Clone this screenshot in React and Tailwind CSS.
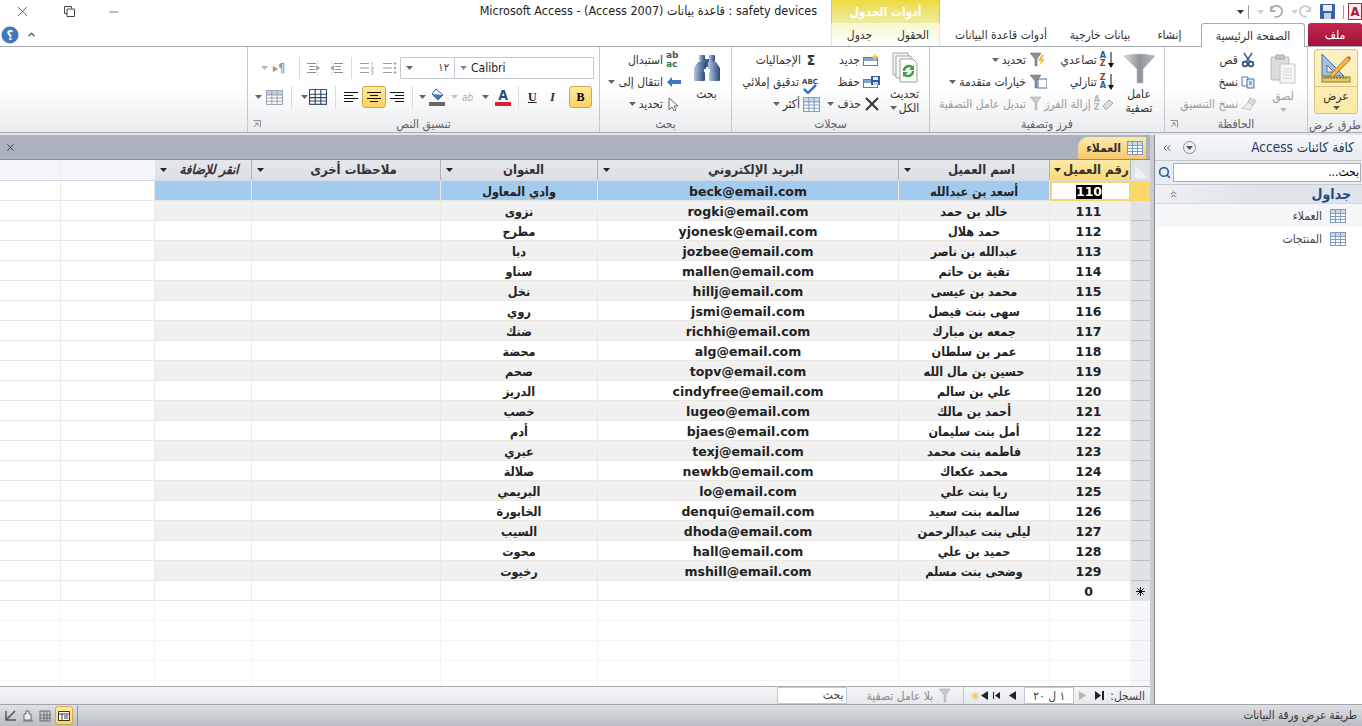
import { ChevronsLeft, ChevronsUp, Search, X, Minus, ChevronUp } from "lucide-react";

const rows = [
  ["110", "أسعد بن عبدالله", "beck@email.com", "وادي المعاول"],
  ["111", "خالد بن حمد", "rogki@email.com", "نزوى"],
  ["112", "حمد هلال", "yjonesk@email.com", "مطرح"],
  ["113", "عبدالله بن ناصر", "jozbee@email.com", "دبا"],
  ["114", "تقية بن حاتم", "mallen@email.com", "سناو"],
  ["115", "محمد بن عيسى", "hillj@email.com", "نخل"],
  ["116", "سهى بنت فيصل", "jsmi@email.com", "روي"],
  ["117", "جمعه بن مبارك", "richhi@email.com", "ضنك"],
  ["118", "عمر بن سلطان", "alg@email.com", "محضة"],
  ["119", "حسين بن مال الله", "topv@email.com", "صحم"],
  ["120", "علي بن سالم", "cindyfree@email.com", "الدريز"],
  ["121", "أحمد بن مالك", "lugeo@email.com", "خصب"],
  ["122", "أمل بنت سليمان", "bjaes@email.com", "أدم"],
  ["123", "فاطمه بنت محمد", "texj@email.com", "عبري"],
  ["124", "محمد عكعاك", "newkb@email.com", "صلالة"],
  ["125", "ريا بنت علي", "lo@email.com", "البريمي"],
  ["126", "سالمه بنت سعيد", "denqui@email.com", "الخابورة"],
  ["127", "ليلى بنت عبدالرحمن", "dhoda@email.com", "السيب"],
  ["128", "حميد بن علي", "hall@email.com", "محوت"],
  ["129", "وضحى بنت مسلم", "mshill@email.com", "رخيوت"],
];

const gridCols = "grid grid-cols-[61px_94px_97px_189px_157px_301px_151px_81px_19px]";
const cell = "border-r border-b border-[#ece9e2] flex items-center justify-center overflow-hidden pt-[3px] leading-[14px]";
const latin = "[font-family:'DejaVu_Sans',sans-serif]";

function Arrow({ className = "" }) {
  return (
    <svg width="7" height="4" viewBox="0 0 7 4" className={`shrink-0 ${className}`}>
      <path d="M0 0h7L3.5 4z" fill="currentColor" />
    </svg>
  );
}

function GridIcon({ size = 16, line = "#7f9cc0", head = "#c9d8ea" }) {
  return (
    <svg width={size} height={size - 2} viewBox="0 0 16 14" className="shrink-0">
      <rect x="0.5" y="0.5" width="15" height="13" fill="#fff" stroke={line} />
      <rect x="1" y="1" width="14" height="3" fill={head} />
      <path d="M0 4.5h16M0 7.5h16M0 10.5h16M5.5 0v14M10.5 0v14" stroke={line} />
    </svg>
  );
}

function Sep() {
  return <div className="w-px h-[22px] bg-[#d8dadd] shrink-0" />;
}

function Launcher() {
  return (
    <svg width="8" height="8" viewBox="0 0 8 8">
      <path d="M0.5 0.5h7v7M1 7l4-4M2 3h3v3" fill="none" stroke="#8c9097" />
    </svg>
  );
}

function Group({ w, label, launcher, children }) {
  return (
    <div className={`${w} shrink-0 border-r border-[#c5c9ce] flex flex-col`}>
      <div className="h-[69px] flex">{children}</div>
      <div className="h-[16px] flex items-center px-[6px] text-[12px] text-[#5c6066] relative justify-center">
        {launcher && (
          <span className="absolute left-[5px] top-[4px]">
            <Launcher />
          </span>
        )}
        <span dir="rtl">{label}</span>
      </div>
    </div>
  );
}

function Item({ icon, text, arrow, muted, className = "" }) {
  return (
    <div className={`h-[22px] flex items-center justify-end gap-[3px] whitespace-nowrap text-[12px] ${muted ? "text-[#9a9a9a]" : "text-[#333]"} ${className}`}>
      {arrow && <Arrow className="text-[#666]" />}
      <span dir="rtl">{text}</span>
      {icon}
    </div>
  );
}

function LinesIcon({ kind }) {
  const lines = {
    left: "M0 1.5h14M0 4.5h9M0 7.5h14M0 10.5h9",
    center: "M0 1.5h14M3 4.5h8M0 7.5h14M3 10.5h8",
    right: "M0 1.5h14M5 4.5h9M0 7.5h14M5 10.5h9",
  };
  return (
    <svg width="14" height="12" viewBox="0 0 14 12">
      <path d={lines[kind]} stroke="#111" fill="none" />
    </svg>
  );
}

function ListIcon({ numbers }) {
  return (
    <svg width="15" height="14" viewBox="0 0 15 14">
      <path d="M0 2.5h9M0 7h9M0 11.5h9" stroke="#9a9ea4" />
      {numbers ? (
        <path d="M12 1v3M11 6h2v2h-2M11 10h2v3h-2" stroke="#a9adb3" fill="none" />
      ) : (
        <g fill="#a9adb3">
          <circle cx="12" cy="2.5" r="1.3" />
          <circle cx="12" cy="7" r="1.3" />
          <circle cx="12" cy="11.5" r="1.3" />
        </g>
      )}
    </svg>
  );
}

function IndentIcon({ flip }) {
  return (
    <svg width="16" height="16" viewBox="0 0 16 16" className={flip ? "-scale-x-100" : ""}>
      <path d="M1 3.5h9M3 6.5h6M3 9.5h6M1 12.5h9" stroke="#8d9197" />
      <path d="M10 5l4 3-4 3z" fill="#a4a8ad" />
      <path d="M12 1v3M12 12v3" stroke="#c3c5c8" strokeDasharray="1 1" />
    </svg>
  );
}

function Paste() {
  return (
    <svg width="26" height="30" viewBox="0 0 26 30">
      <rect x="1" y="3" width="18" height="23" rx="1" fill="#dcdcdc" stroke="#bbb" />
      <rect x="6" y="1" width="8" height="4" fill="#c8c8c8" stroke="#aaa" />
      <path d="M10 10h15v19H10z" fill="#f6f6f6" stroke="#c4c4c4" />
      <path d="M13 15h9M13 18h9M13 21h9M13 24h9" stroke="#d2d2d2" />
    </svg>
  );
}

function Funnel() {
  return (
    <svg width="31" height="31" viewBox="0 0 31 31">
      <defs>
        <linearGradient id="fnl" x1="0" x2="1">
          <stop offset="0" stopColor="#d5d8dc" />
          <stop offset="0.5" stopColor="#8f9499" />
          <stop offset="1" stopColor="#b5b9be" />
        </linearGradient>
      </defs>
      <path d="M0 3q15 -4 31 0L19 16v14h-6V16z" fill="url(#fnl)" stroke="#a5a9ad" strokeWidth="0.5" />
    </svg>
  );
}

function Binoculars() {
  return (
    <svg width="28" height="28" viewBox="0 0 28 28">
      <defs>
        <linearGradient id="bin" x1="0" x2="1">
          <stop offset="0" stopColor="#b6c6dc" />
          <stop offset="0.5" stopColor="#6a86ad" />
          <stop offset="1" stopColor="#33496d" />
        </linearGradient>
      </defs>
      <rect x="6" y="1" width="6" height="7" rx="1" fill="url(#bin)" />
      <rect x="16" y="1" width="6" height="7" rx="1" fill="url(#bin)" />
      <rect x="12" y="5" width="4" height="8" fill="#3e5b87" />
      <path d="M5 8h8v7h-2v4H1v-5z" fill="url(#bin)" />
      <path d="M15 8h8l4 6v5H17v-4h-2z" fill="url(#bin)" />
      <rect x="1" y="18" width="11" height="9" rx="1" fill="url(#bin)" />
      <rect x="16" y="18" width="11" height="9" rx="1" fill="url(#bin)" />
    </svg>
  );
}

function ViewIcon() {
  return (
    <svg width="30" height="30" viewBox="0 0 30 30">
      <path d="M1 1v22h22z" fill="#a8c0dc" stroke="#4d6f99" />
      <path d="M6 12v7h7z" fill="#fdf6d8" stroke="#4d6f99" />
      <path d="M9 22L26 4l3 3-17 17-4 1z" fill="#f3b64a" stroke="#8a6a2a" strokeWidth="0.7" />
      <path d="M26 4l3 3 1-2-2-2z" fill="#d85c4a" />
      <rect x="1" y="24" width="28" height="5" fill="#e9c962" stroke="#8c7a3c" />
      <path d="M4 24v2M7 24v2M10 24v2M13 24v2M16 24v2M19 24v2M22 24v2M25 24v2" stroke="#6d5d2a" />
    </svg>
  );
}

function Refresh() {
  return (
    <svg width="26" height="32" viewBox="0 0 26 32">
      <path d="M1 1h15v22H1z" fill="#f2f2f2" stroke="#a5a9ad" />
      <path d="M4 4h15v22H4z" fill="#f7f7f7" stroke="#a5a9ad" />
      <path d="M8 7h13l4 4v19H8z" fill="#fff" stroke="#9a9ea3" />
      <path d="M12 19a5 5 0 0 1 9-3M21 19a5 5 0 0 1-9 3" fill="none" stroke="#3ba13a" strokeWidth="2.4" />
      <path d="M22 13v5h-5zM11 25v-5h5z" fill="#3ba13a" />
    </svg>
  );
}

function SortIcon({ desc, muted }) {
  const top = desc ? "Z" : "A";
  const bottom = desc ? "A" : "Z";
  return (
    <div className={`flex items-center gap-[2px] ${latin}`}>
      <div className={`flex flex-col text-[8px] leading-[8px] font-bold ${muted ? "text-[#b5b5b5]" : ""}`}>
        <span className={muted ? "" : desc ? "text-[#a23a2a]" : "text-[#2a5a9e]"}>{top}</span>
        <span className={muted ? "" : desc ? "text-[#2a5a9e]" : "text-[#a23a2a]"}>{bottom}</span>
      </div>
      {muted ? (
        <svg width="12" height="12" viewBox="0 0 12 12">
          <path d="M1 8l6-6 4 3-6 6H3z" fill="#ddd" stroke="#aaa" />
        </svg>
      ) : (
        <svg width="6" height="16" viewBox="0 0 6 16">
          <path d="M3 0v14" stroke="#111" />
          <path d="M0 11h6l-3 5z" fill="#111" />
        </svg>
      )}
    </div>
  );
}

function SmallFunnel({ children, muted }) {
  return (
    <svg width="18" height="16" viewBox="0 0 18 16" className="shrink-0">
      <path d="M1 1h11L8 7v7H6V7z" fill={muted ? "#c6c8cb" : "#8a9097"} stroke={muted ? "#aaa" : "#666"} strokeWidth="0.5" />
      {children}
    </svg>
  );
}

function Sheet({ save }) {
  return (
    <svg width="17" height="14" viewBox="0 0 17 14">
      <rect x="0.5" y="4.5" width="14" height="8" fill="#fff" stroke="#5a7fae" />
      <rect x="1" y="5" width="13" height="3" fill="#7fa6d2" />
      {save ? (
        <g>
          <rect x="8" y="1" width="9" height="9" fill="#2f5d99" />
          <rect x="10" y="2" width="5" height="3" fill="#e8eef7" />
          <rect x="10" y="7" width="5" height="3" fill="#c4cedd" />
        </g>
      ) : (
        <path d="M12 0l1.2 2.8L16 4l-2.8 1.2L12 8l-1.2-2.8L8 4l2.8-1.2z" fill="#f3c94e" />
      )}
    </svg>
  );
}

function Ribbon() {
  return (
    <div className="h-[86px] flex shrink-0 border-b border-[#a8abb0] bg-gradient-to-b from-white via-white to-[#e9ebed]">
      <div className="w-[248px] shrink-0 border-r border-[#c5c9ce]" />

      {/* text formatting */}
      <Group w="w-[352px]" label="تنسيق النص" launcher>
        <div className="w-full pt-[10px] pl-[7px] pr-[5px]">
          <div className="h-[22px] flex items-center">
            <div className="w-[6px]" />
            <Arrow className="text-[#b8b8b8]" />
            <div className="w-[22px] text-[#999] text-[12px] font-bold text-center">▸¶</div>
            <div className="w-[9px]" />
            <Sep />
            <div className="w-[6px]" />
            <IndentIcon />
            <div className="w-[6px]" />
            <IndentIcon flip />
            <div className="w-[7px]" />
            <Sep />
            <div className="w-[8px]" />
            <ListIcon numbers />
            <div className="w-[8px]" />
            <ListIcon />
            <div className="w-[2px]" />
            <div className="w-[55px] h-[22px] border border-[#c5c9ce] flex items-center justify-between px-[5px] text-[11px] text-[#333]">
              <Arrow className="text-[#666]" />
              <span>١٢</span>
            </div>
            <div className="w-[139px] h-[22px] border border-l-0 border-[#c5c9ce] flex items-center gap-[4px] px-[5px] text-[12px] text-[#222]">
              <Arrow className="text-[#888]" />
              <span>Calibri</span>
            </div>
          </div>
          <div className="h-[24px] mt-[6px] flex items-center">
            <Arrow className="text-[#666]" />
            <div className="w-[4px]" />
            <GridIcon size={17} line="#99a3b0" head="#c0cfe0" />
            <div className="w-[8px]" />
            <Sep />
            <div className="w-[9px]" />
            <Arrow className="text-[#666]" />
            <div className="w-[1px]" />
            <GridIcon size={18} line="#2f4568" head="#fff" />
            <div className="w-[8px]" />
            <Sep />
            <div className="w-[8px]" />
            <LinesIcon kind="left" />
            <div className="w-[4px]" />
            <div className="w-[24px] h-[22px] rounded-[3px] border border-[#d0a94a] bg-gradient-to-b from-[#fee89a] to-[#fdd35f] flex items-center justify-center">
              <LinesIcon kind="center" />
            </div>
            <div className="w-[4px]" />
            <LinesIcon kind="right" />
            <div className="w-[8px]" />
            <Sep />
            <div className="w-[6px]" />
            <Arrow className="text-[#666]" />
            <div className="w-[3px]" />
            <svg width="16" height="18" viewBox="0 0 16 18">
              <path d="M7 1l7 6-5 5-6-6z" fill="#fff" stroke="#2f5d99" />
              <path d="M3 6l6 6 5-5z" fill="#3f78ba" />
              <rect x="0" y="14" width="16" height="4" fill="#666" />
            </svg>
            <div className="w-[6px]" />
            <Arrow className="text-[#c4c4c4]" />
            <div className="w-[4px]" />
            <span className="text-[10px] text-[#aaa] w-[20px] italic">ab</span>
            <Arrow className="text-[#666]" />
            <div className="w-[6px]" />
            <div className="flex flex-col items-center w-[16px] leading-none">
              <span className="text-[14px] font-bold text-[#2a4d80] leading-[14px]">A</span>
              <span className="w-[16px] h-[4px] bg-[#d8232a]" />
            </div>
            <div className="w-[7px]" />
            <Sep />
            <div className="w-[9px]" />
            <span className="text-[12px] font-bold underline text-[#222] w-[12px] [font-family:'Liberation_Serif',serif]">U</span>
            <div className="w-[10px]" />
            <span className="text-[13px] italic font-bold text-[#333] w-[12px] [font-family:'Liberation_Serif',serif]">I</span>
            <div className="w-[7px]" />
            <div className="w-[23px] h-[22px] rounded-[3px] border border-[#d0a94a] bg-gradient-to-b from-[#fee89a] to-[#fdd35f] flex items-center justify-center text-[12px] font-bold [font-family:'Liberation_Serif',serif]">
              B
            </div>
          </div>
        </div>
      </Group>

      {/* find */}
      <Group w="w-[132px]" label="بحث">
        <div className="w-[82px] pt-[2px]">
          <Item
            text="استبدال"
            icon={
              <span className={`text-[9px] leading-[9px] font-bold text-[#555] w-[16px] ${latin}`}>
                ab<span className="block text-[#2f7a3a]">ac</span>
              </span>
            }
          />
          <Item
            text="انتقال إلى"
            arrow
            icon={
              <svg width="14" height="10" viewBox="0 0 14 10" className="mx-[1px]">
                <path d="M0 5l5-5v3h9v4H5v3z" fill="#3e78c0" />
              </svg>
            }
          />
          <Item
            text="تحديد"
            arrow
            icon={
              <svg width="12" height="14" viewBox="0 0 12 14" className="mx-[2px]">
                <path d="M1 1l9 8H6l2 4-2 1-2-4-3 3z" fill="#fff" stroke="#666" />
              </svg>
            }
          />
        </div>
        <div className="flex-1 flex flex-col items-center pt-[7px] text-[12px] text-[#333]">
          <Binoculars />
          <span className="mt-[3px]">بحث</span>
        </div>
      </Group>

      {/* records */}
      <Group w="w-[198px]" label="سجلات">
        <div className="w-[88px] pt-[2px]">
          <Item text="الإجماليات" className="pr-[2px]" icon={<span className="w-[14px] text-center text-[14px] font-bold leading-none">Σ</span>} />
          <Item
            text="تدقيق إملائي"
            icon={
              <span className={`w-[18px] relative text-[7px] font-bold text-[#444] leading-none ${latin}`}>
                ABC
                <svg width="14" height="10" viewBox="0 0 14 10" className="absolute left-[1px] top-[5px]">
                  <path d="M1 5l4 4 8-8" fill="none" stroke="#3f78ba" strokeWidth="2.5" />
                </svg>
              </span>
            }
          />
          <Item text="أكثر" arrow icon={<GridIcon size={17} />} />
        </div>
        <div className="w-[60px] pt-[2px]">
          <Item text="جديد" icon={<Sheet />} />
          <Item text="حفظ" icon={<Sheet save />} />
          <Item
            text="حذف"
            arrow
            icon={
              <svg width="14" height="14" viewBox="0 0 14 14" className="mx-[1px]">
                <path d="M1 1l12 12M13 1L1 13" stroke="#333" strokeWidth="2" />
              </svg>
            }
          />
        </div>
        <div className="flex-1 flex flex-col items-center pt-[5px] text-[12px] leading-[14px] text-[#333]">
          <Refresh />
          <span className="mt-[3px]">تحديث</span>
          <span className="flex items-center gap-[2px]">
            <Arrow className="text-[#666]" />
            الكل
          </span>
        </div>
      </Group>

      {/* sort and filter */}
      <Group w="w-[235px]" label="فرز وتصفية">
        <div className="w-[117px] pt-[2px]">
          <Item text="تحديد" arrow icon={<SmallFunnel><path d="M12 3l-3 6h3l-2 5 6-7h-3l2-4z" fill="#f2c23e" /></SmallFunnel>} />
          <Item text="خيارات متقدمة" arrow icon={<SmallFunnel><rect x="9" y="5" width="9" height="9" fill="#fff" stroke="#4a76aa" /></SmallFunnel>} />
          <Item text="تبديل عامل التصفية" muted icon={<SmallFunnel muted />} />
        </div>
        <div className="w-[67px] pt-[2px]">
          <Item text="تصاعدي" icon={<SortIcon />} />
          <Item text="تنازلي" icon={<SortIcon desc />} />
          <Item text="إزالة الفرز" muted icon={<SortIcon muted />} />
        </div>
        <div className="flex-1 flex flex-col items-center pt-[6px] text-[12px] leading-[14px] text-[#333]">
          <Funnel />
          <span className="mt-[3px]">عامل</span>
          <span>تصفية</span>
        </div>
      </Group>

      {/* clipboard */}
      <Group w="w-[143px]" label="الحافظة" launcher>
        <div className="w-[94px] pt-[2px] pr-[2px]">
          <Item
            text="قص"
            className="pr-[2px]"
            icon={
              <svg width="14" height="16" viewBox="0 0 14 16">
                <path d="M3 1l6 9M11 1L5 10" stroke="#3f5f8f" strokeWidth="1.5" />
                <circle cx="4" cy="12" r="2.4" fill="none" stroke="#2f4f7f" strokeWidth="1.6" />
                <circle cx="10" cy="12" r="2.4" fill="none" stroke="#2f4f7f" strokeWidth="1.6" />
              </svg>
            }
          />
          <Item
            text="نسخ"
            className="pr-[2px]"
            icon={
              <svg width="14" height="13" viewBox="0 0 14 13">
                <path d="M1 1h6v9H1z" fill="#fff" stroke="#4a76aa" />
                <path d="M6 3h7v9H6z" fill="#dce9f7" stroke="#4a76aa" />
                <path d="M8 6h3M8 8h3" stroke="#4a76aa" />
              </svg>
            }
          />
          <Item
            text="نسخ التنسيق"
            muted
            icon={
              <svg width="16" height="14" viewBox="0 0 16 14">
                <path d="M9 1l6 3-3 4-5-3z" fill="#ddd" stroke="#bbb" />
                <path d="M7 5l5 3-3 5-8-2q4-1 6-6z" fill="#eee" stroke="#c6c6c6" />
              </svg>
            }
          />
        </div>
        <div className="flex-1 flex flex-col items-center pt-[7px] text-[12px] leading-[14px] text-[#9a9a9a]">
          <Paste />
          <span className="mt-[5px]">لصق</span>
          <Arrow className="mt-[5px] text-[#bbb]" />
        </div>
      </Group>

      {/* views */}
      <div className="flex-1 flex flex-col">
        <div className="h-[69px] pl-[6px] pr-[4px] pt-[2px]">
          <div className="h-[65px] rounded-[3px] border border-[#d9c47c] bg-gradient-to-b from-[#fdf2c4] to-[#fbe9a6] flex flex-col items-center pt-[3px]">
            <ViewIcon />
            <div className="w-full h-px bg-[#d9c47c] mt-[3px]" />
            <span className="text-[12px] leading-[14px] mt-[2px] text-[#333]">عرض</span>
            <Arrow className="mt-[3px] text-[#555]" />
          </div>
        </div>
        <div className="h-[16px] text-[12px] text-[#5c6066] text-center whitespace-nowrap">طرق عرض</div>
      </div>
    </div>
  );
}

function Header() {
  return (
    <>
      <div className="h-[23px] flex shrink-0">
        <div className="w-[831px] shrink-0 flex items-center">
          <X size={17} strokeWidth={1} className="ml-[14px] text-[#333]" />
          <svg width="11" height="11" viewBox="0 0 11 11" className="ml-[33px]">
            <path d="M0.5 0.5h7v2M3 3h7.5v7.5H3zM0.5 0.5v7h2.5" fill="none" stroke="#444" />
          </svg>
          <Minus size={14} strokeWidth={1.2} className="ml-[32px] text-[#333]" />
          <div className="flex-1 text-[12.5px] text-[#222] whitespace-nowrap text-right pr-[14px]">
            Microsoft Access - (Access 2007) قاعدة بيانات : safety devices
          </div>
        </div>
        <div className="w-[109px] shrink-0 border-x border-[#dcc94b] bg-gradient-to-b from-[#efd93b] to-[#ecec9e] flex items-center justify-center text-[12px] font-bold text-white" dir="rtl">
          أدوات الجدول
        </div>
        <div className="flex-1 flex items-center justify-end">
          <Arrow className="text-[#333]" />
          <div className="w-px h-[14px] bg-[#999] ml-[4px]" />
          <Arrow className="text-[#ccc] ml-[8px]" />
          <svg width="14" height="13" viewBox="0 0 15 13" className="ml-[5px]">
            <path d="M2 1v5h5M2 6a6 6 0 1 1 4 6" fill="none" stroke="#a8aeb6" strokeWidth="2" />
          </svg>
          <Arrow className="text-[#ccc] ml-[8px]" />
          <svg width="13" height="13" viewBox="0 0 15 13" className="ml-[1px]">
            <path d="M13 1v5H8M13 6a6 6 0 1 0-4 6" fill="none" stroke="#c6cad0" strokeWidth="2" />
          </svg>
          <svg width="15" height="15" viewBox="0 0 15 15" className="ml-[8px]">
            <rect width="15" height="15" rx="1" fill="#3a5fa8" />
            <rect x="3" y="1" width="9" height="6" fill="#e8eef7" />
            <rect x="4" y="9" width="7" height="6" fill="#c4cedd" />
          </svg>
          <div className="w-px h-[14px] bg-[#999] ml-[8px]" />
          <div className="w-[14px] h-[17px] ml-[4px] border border-[#a52a4a] bg-[#fbeef0] text-[#a5173c] text-[13px] leading-[15px] font-bold text-center">
            A
          </div>
        </div>
      </div>
      <div className="h-[24px] flex shrink-0 items-end">
        <div className="w-[831px] shrink-0 flex items-center h-[24px] border-b border-[#a8abb0]">
          <svg width="18" height="18" viewBox="0 0 18 18" className="ml-[1px]">
            <circle cx="9" cy="9" r="8.5" fill="#3f78bf" />
            <text x="9" y="14" textAnchor="middle" fontSize="13" fontWeight="bold" fill="#fff">؟</text>
          </svg>
          <ChevronUp size={11} className="ml-[7px] text-[#444]" strokeWidth={2.5} />
        </div>
        <div className="h-[24px] w-[109px] shrink-0 border-x border-b border-[#e8e8b8] border-b-[#a8abb0] bg-gradient-to-b from-[#f7f7cf] to-white flex text-[12px] text-[#333]">
          <span className="w-[55px] text-center pt-[3px]">جدول</span>
          <span className="w-[52px] text-center pt-[3px]">الحقول</span>
        </div>
        <div className="w-[261px] shrink-0 h-[24px] border-b border-[#a8abb0] flex text-[12px] text-[#333]">
          <span className="w-[122px] text-center pt-[3px]" dir="rtl">أدوات قاعدة البيانات</span>
          <span className="w-[76px] text-center pt-[3px]">بيانات خارجية</span>
          <span className="w-[63px] text-center pt-[3px]">إنشاء</span>
        </div>
        <div className="w-[104px] shrink-0 h-[24px] border border-b-0 border-[#a8abb0] rounded-t-[3px] bg-white text-center text-[12px] text-[#333] pt-[3px]">
          الصفحة الرئيسية
        </div>
        <div className="w-[3px] shrink-0 h-[24px] border-b border-[#a8abb0]" />
        <div className="flex-1 h-[24px] rounded-t-[3px] border-b border-[#a8abb0] bg-gradient-to-b from-[#c4264f] to-[#a0123a] text-white text-center text-[12px] pt-[3px]">
          ملف
        </div>
      </div>
    </>
  );
}

function HeaderCell({ children, italic, pad = "ml-[6px]" }) {
  return (
    <div className="border-r border-[#aeb3ba] bg-gradient-to-b from-[#e4e7eb] to-[#dcdfe4] flex items-center pl-[5px] pr-[3px] overflow-hidden">
      <Arrow className="text-[#222]" />
      <span dir="rtl" className={`${pad} flex-1 text-center text-[13px] font-bold text-[#333] whitespace-nowrap ${italic ? "italic" : ""}`}>
        {children}
      </span>
    </div>
  );
}

function Datasheet() {
  return (
    <div className="flex-1 flex flex-col min-h-0 overflow-hidden bg-white">
      <div className={`${gridCols} h-[21px] shrink-0 bg-[#f5f6fc] border-b border-[#d7dae0]`}>
        <div className="border-r border-[#ece9f2]" />
        <div />
        <HeaderCell italic pad="ml-[3px]">انقر للإضافة</HeaderCell>
        <HeaderCell>ملاحظات أخرى</HeaderCell>
        <HeaderCell pad="ml-[0px]">العنوان</HeaderCell>
        <HeaderCell>البريد الإلكتروني</HeaderCell>
        <HeaderCell>اسم العميل</HeaderCell>
        <div className="border-r border-[#aeb3ba] bg-gradient-to-b from-[#fdeaa8] to-[#fbd96f] flex items-center pl-[4px] pr-[2px]">
          <Arrow className="text-[#222]" />
          <span dir="rtl" className="ml-[2px] flex-1 text-center text-[13px] font-bold text-[#333] whitespace-nowrap">رقم العميل</span>
        </div>
        <div className="bg-[#dfe2e7] flex items-end justify-end p-[2px]">
          <svg width="13" height="13" viewBox="0 0 13 13">
            <path d="M0 0l13 13H0z" fill="#eef0f3" />
          </svg>
        </div>
      </div>

      {rows.map((r, i) => {
        const selected = i === 0;
        const bg = selected ? "bg-[#a3cbee]" : i % 2 === 1 ? "bg-[#f0f0f0]" : "bg-white";
        return (
          <div key={r[0]} className={`${gridCols} h-[20px] shrink-0 text-[12.5px] font-bold text-[#222]`}>
            <div className="border-r border-b border-[#ece9e2] bg-white" />
            <div className="border-r border-b border-[#ece9e2] bg-white" />
            <div className={`${cell} ${bg}`} />
            <div className={`${cell} ${bg}`} />
            <div className={`${cell} ${bg}`} dir="rtl">{r[3]}</div>
            <div className={`${cell} ${bg} ${latin}`}>{r[2]}</div>
            <div className={`${cell} ${bg}`} dir="rtl">{r[1]}</div>
            {selected ? (
              <div className={`bg-white border-2 border-[#f5d573] flex items-center justify-center pt-[2px] pr-[3px] ${latin}`}>
                <span className="bg-black text-white leading-[14px]">{r[0]}</span>
              </div>
            ) : (
              <div className={`${cell} ${bg} ${latin} pr-[3px]`}>{r[0]}</div>
            )}
            <div className={selected ? "bg-[#fdd868]" : "bg-[#dfe2e7] border-b border-[#b9bdc4]"} />
          </div>
        );
      })}

      <div className={`${gridCols} h-[20px] shrink-0 text-[12.5px] font-bold text-[#222] ${latin}`}>
        <div className={cell} />
        <div className={cell} />
        <div className={cell} />
        <div className={cell} />
        <div className={cell} />
        <div className={cell} />
        <div className={cell} />
        <div className={`${cell} pr-[3px]`}>0</div>
        <div className="bg-[#dfe2e7] flex items-center justify-center">
          <svg width="9" height="9" viewBox="0 0 9 9">
            <path d="M4.5 0v9M0 4.5h9M1.3 1.3l6.4 6.4M7.7 1.3L1.3 7.7" stroke="#111" />
          </svg>
        </div>
      </div>

      {[0, 1, 2, 3, 4].map((i) => (
        <div key={i} className={`${gridCols} h-[20px] shrink-0`}>
          <div className="border-r border-b border-[#f5f4f0]" />
          <div className="border-r border-b border-[#f5f4f0]" />
          <div className="border-r border-b border-[#f5f4f0]" />
          <div className="border-r border-b border-[#f5f4f0]" />
          <div className="border-r border-b border-[#f5f4f0]" />
          <div className="border-r border-b border-[#f5f4f0]" />
          <div className="border-r border-b border-[#f5f4f0]" />
          <div className="border-r border-b border-[#f5f4f0]" />
          <div className="bg-[#f5f6fc] border-b border-[#e8e9ef]" />
        </div>
      ))}
    </div>
  );
}

function NavGlyph({ d, muted }) {
  return (
    <svg width="9" height="9" viewBox="0 0 9 9" className="shrink-0">
      <path d={d} fill={muted ? "#b5b5b5" : "#222"} />
    </svg>
  );
}

function RecordBar() {
  return (
    <div className="h-[18px] shrink-0 border-t border-[#a8abb0] bg-gradient-to-b from-[#f4f5f6] to-[#e6e8ec] flex items-center justify-end text-[12px] text-[#444]">
      <div className="w-[70px] h-[17px] bg-white border border-[#c5c9ce] text-right pr-[3px] leading-[15px] mr-[19px]" dir="rtl">
        بحث
      </div>
      <div className="flex items-center gap-[5px] text-[#8a8a8a] mr-[7px]">
        <span dir="rtl">بلا عامل تصفية</span>
        <SmallFunnel muted />
      </div>
      <div className="w-px h-[18px] bg-[#c5c9ce] mr-[7px]" />
      <svg width="8" height="8" viewBox="0 0 8 8" className="shrink-0 mr-[1px]">
        <path d="M4 0v8M0 4h8M1 1l6 6M7 1L1 7" stroke="#f0c63f" />
      </svg>
      <NavGlyph d="M8 0v9L1 4.5z" />
      <div className="w-[4px]" />
      <NavGlyph d="M1 1v7H0V1zM7 1v7L2 4.5z" />
      <div className="w-[6px]" />
      <NavGlyph d="M8 0v9L1 4.5z" />
      <div className="w-[7px]" />
      <div className="w-[50px] h-[17px] bg-white border border-[#c5c9ce] flex items-center justify-center" dir="rtl">
        ١ ل ٢٠
      </div>
      <div className="w-[4px]" />
      <NavGlyph d="M1 0v9l7-4.5z" muted />
      <div className="w-[8px]" />
      <NavGlyph d="M0 0v9l6-4.5zM7 0v9h2V0z" />
      <div className="w-[6px]" />
      <span dir="rtl" className="mr-[5px]">السجل:</span>
    </div>
  );
}

function NavPane() {
  return (
    <div className="w-[208px] shrink-0 bg-white border-l border-[#888d94] flex flex-col">
      <div className="h-[26px] shrink-0 bg-gradient-to-b from-[#f6f7f9] to-[#e9ecf0] border-b border-[#c5c9ce] flex items-center pl-[6px] pr-[8px] text-[13.5px] text-[#1e395b]">
        <ChevronsLeft size={12} className="text-[#555]" />
        <div className="w-[13px] h-[13px] rounded-full border border-[#888d94] ml-[10px] flex items-center justify-center">
          <Arrow className="text-[#555]" />
        </div>
        <span dir="rtl" className="flex-1 text-right">كافة كائنات Access</span>
      </div>
      <div className="h-[24px] shrink-0 bg-[#e9ecf0] border-b border-[#c5c9ce] flex items-center px-[1px] gap-[2px]">
        <Search size={13} strokeWidth={3} className="text-[#2a5f9e] ml-[2px]" />
        <div className="flex-1 h-[19px] bg-white border border-[#a8abb0] text-right text-[12px] leading-[17px] pr-[1px]" dir="rtl">
          بحث...
        </div>
      </div>
      <div className="h-[19px] shrink-0 bg-gradient-to-r from-[#eef0f3] via-[#dfe3ea] to-[#dfe3ea] border-b border-[#d5d8dd] flex items-center justify-between pl-[13px] pr-[11px]">
        <ChevronsUp size={11} className="text-[#555]" />
        <span className="text-[14px] font-bold text-[#1e4a80]">جداول</span>
      </div>
      <div className="h-[23px] shrink-0 bg-[#f5f6f7] flex items-center justify-end gap-[8px] pr-[16px] text-[12px] text-[#444]">
        <span>العملاء</span>
        <GridIcon />
      </div>
      <div className="h-[23px] shrink-0 flex items-center justify-end gap-[8px] pr-[16px] text-[12px] text-[#444]">
        <span>المنتجات</span>
        <GridIcon />
      </div>
    </div>
  );
}

function StatusBar() {
  return (
    <div className="h-[22px] shrink-0 border-t border-[#a1a4a9] bg-gradient-to-b from-[#dee1e5] to-[#b9bdc3] flex items-center text-[11.5px] text-[#333]">
      <div className="w-[55px] flex items-center justify-around pl-[2px] pr-[1px] text-[#666]">
        <svg width="12" height="12" viewBox="0 0 12 12"><path d="M1 1v9h10M1 10l9-9" stroke="#555" fill="none" strokeWidth="1.5" /></svg>
        <svg width="12" height="12" viewBox="0 0 12 12"><path d="M2 10V4h2V1h3v3h2v6zM1 11h10" stroke="#666" fill="#eee" /></svg>
        <svg width="12" height="12" viewBox="0 0 12 12"><path d="M1 1h10v10H1zM1 5h10M1 8h10M5 1v10M8 1v10" stroke="#666" fill="none" /></svg>
      </div>
      <div className="w-[18px] h-[19px] rounded-[3px] border border-[#d0a94a] bg-gradient-to-b from-[#fee89a] to-[#fdd35f] flex items-center justify-center">
        <svg width="12" height="10" viewBox="0 0 12 10"><path d="M0.5 0.5h11v9H0.5zM0.5 3h11M4 3v6.5M6 5h4M6 7h4" stroke="#333" fill="#fff" /></svg>
      </div>
      <div className="w-px h-[20px] bg-[#8f9399] ml-[4px]" />
      <span dir="rtl" className="ml-auto mr-[5px]">طريقة عرض ورقة البيانات</span>
    </div>
  );
}

export default function App() {
  return (
    <div className="w-[1362px] h-[726px] overflow-hidden bg-white flex flex-col [font-family:'DejaVu_Sans_Condensed','DejaVu_Sans',sans-serif]">
      <Header />
      <Ribbon />
      <div className="h-[2px] shrink-0 bg-[#e2e4e7]" />
      <div className="flex-1 flex min-h-0">
        <div className="w-[1150px] shrink-0 flex flex-col min-h-0">
          <div className="h-[25px] shrink-0 bg-[#abb2bd] border-b border-[#8a8f96] flex items-end justify-between pl-[5px]">
            <X size={11} strokeWidth={2} className="text-[#333] mb-[6px]" />
            <div className="w-[68px] h-[22px] mr-[4px] rounded-tl-[10px] bg-gradient-to-b from-[#fdeaa8] to-[#f8c86a] flex items-center justify-end gap-[6px] pr-[3px] text-[12px] font-bold text-[#333]">
              <span>العملاء</span>
              <GridIcon />
            </div>
          </div>
          <Datasheet />
          <RecordBar />
        </div>
        <div className="w-[4px] shrink-0 bg-[#c9ccd1]" />
        <NavPane />
      </div>
      <StatusBar />
    </div>
  );
}
